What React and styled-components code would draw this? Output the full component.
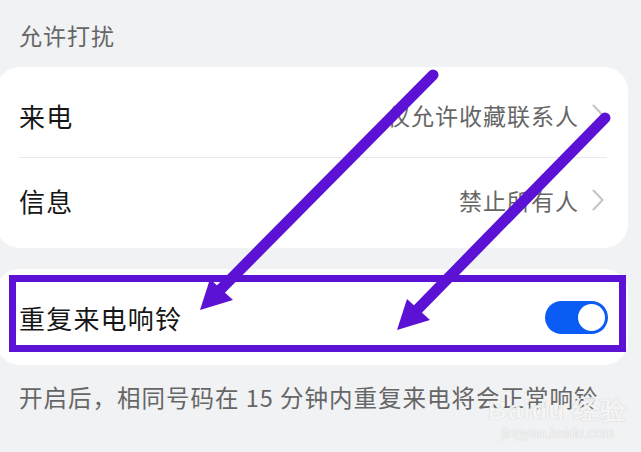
import React from "react";
import styled, { createGlobalStyle } from "styled-components";

const Global = createGlobalStyle`
  html, body { margin: 0; padding: 0; background: #f1f2f4; }
  body { font-family: "Noto Sans CJK SC", "Noto Sans", sans-serif; }
`;

const Screen = styled.div`
  position: relative;
  width: 641px;
  height: 452px;
  overflow: hidden;
  background: #f1f2f4;
`;

const SectionTitle = styled.div`
  height: 67px;
  padding: 10px 0 8px 19px;
  display: flex;
  align-items: center;
  font-size: 23px;
  letter-spacing: 1px;
  color: #666;
  box-sizing: border-box;
`;

const Card = styled.div`
  margin-left: -4px;
  width: 632px;
  background: #fff;
  border-radius: 24px;
  padding: 0 24px 0 23px;
  box-sizing: border-box;
  margin-top: ${(p) => p.$top || 0}px;
`;

const Row = styled.div`
  height: ${(p) => p.$h}px;
  display: flex;
  align-items: center;
  padding-top: ${(p) => p.$pt || 0}px;
  padding-bottom: ${(p) => p.$pb || 0}px;
  border-bottom: ${(p) => (p.$divider ? "1.5px solid #e9e9eb" : "none")};
  box-sizing: border-box;
  margin-right: ${(p) => (p.$divider ? "-3px" : "0")};
  padding-right: ${(p) => (p.$divider ? "3px" : "0")};
`;

const Label = styled.div`
  flex: 1;
  font-size: 26px;
  letter-spacing: 1.2px;
  color: #161616;
`;

const Value = styled.div`
  font-size: 23px;
  letter-spacing: 1px;
  color: #666;
  margin-right: 13px;
`;

const Toggle = styled.div`
  width: 63px;
  height: 33px;
  border-radius: 17px;
  background: #0a5cf5;
  display: flex;
  align-items: center;
  justify-content: flex-end;
  padding-right: 3px;
  box-sizing: border-box;
  margin-right: -4px;
`;

const Knob = styled.div`
  width: 27px;
  height: 27px;
  border-radius: 50%;
  background: #fff;
`;

const Footer = styled.div`
  margin-top: 16px;
  padding-left: 19px;
  font-size: 23.5px;
  letter-spacing: 1px;
  line-height: 32px;
  color: #666;
  white-space: nowrap;
`;

const Overlay = styled.svg`
  position: absolute;
  left: 0;
  top: 0;
  pointer-events: none;
`;

const Watermark = styled.div`
  position: absolute;
  left: 488px;
  top: 395px;
  display: flex;
  flex-direction: column;
  align-items: center;
  color: rgba(255, 255, 255, 0.85);
  text-shadow: 0 0 1px rgba(150, 150, 150, 0.6);
  font-family: "Liberation Sans", sans-serif;
`;

const WmTop = styled.div`
  font-size: 26px;
  font-weight: 700;
  line-height: 30px;
  letter-spacing: 1px;
`;

const WmBottom = styled.div`
  font-size: 14px;
  line-height: 16px;
`;

const Chevron = () => (
  <svg width="12" height="22" viewBox="0 0 12 22">
    <polyline points="1.5,1.5 10.5,11 1.5,20.5" fill="none" stroke="#c4c4c6" strokeWidth="2" strokeLinecap="round" strokeLinejoin="round" />
  </svg>
);

const PURPLE = "#5c12d4";

export default function App() {
  return (
    <>
      <Global />
      <Screen>
        <SectionTitle>允许打扰</SectionTitle>
        <Card>
          <Row $h={91} $pt={6} $divider>
            <Label>来电</Label>
            <Value>仅允许收藏联系人</Value>
            <Chevron />
          </Row>
          <Row $h={90} $pb={6}>
            <Label>信息</Label>
            <Value>禁止所有人</Value>
            <Chevron />
          </Row>
        </Card>
        <Card $top={21}>
          <Row $h={96}>
            <Label>重复来电响铃</Label>
            <Toggle>
              <Knob />
            </Toggle>
          </Row>
        </Card>
        <Footer>开启后，相同号码在 15 分钟内重复来电将会正常响铃</Footer>
        <Watermark>
          <WmTop>Baidu 经验</WmTop>
          <WmBottom>jingyan.baidu.com</WmBottom>
        </Watermark>
        <Overlay width="641" height="452" viewBox="0 0 641 452">
          <rect x="12.5" y="278.5" width="610" height="70" fill="none" stroke={PURPLE} strokeWidth="7" />
          <line x1="433" y1="75" x2="216" y2="294" stroke={PURPLE} strokeWidth="11" strokeLinecap="round" />
          <polygon points="200,310 210,279 233,300" fill={PURPLE} />
          <line x1="605" y1="118" x2="413" y2="314" stroke={PURPLE} strokeWidth="11" strokeLinecap="round" />
          <polygon points="397,330 407,299 430,320" fill={PURPLE} />
        </Overlay>
      </Screen>
    </>
  );
}
